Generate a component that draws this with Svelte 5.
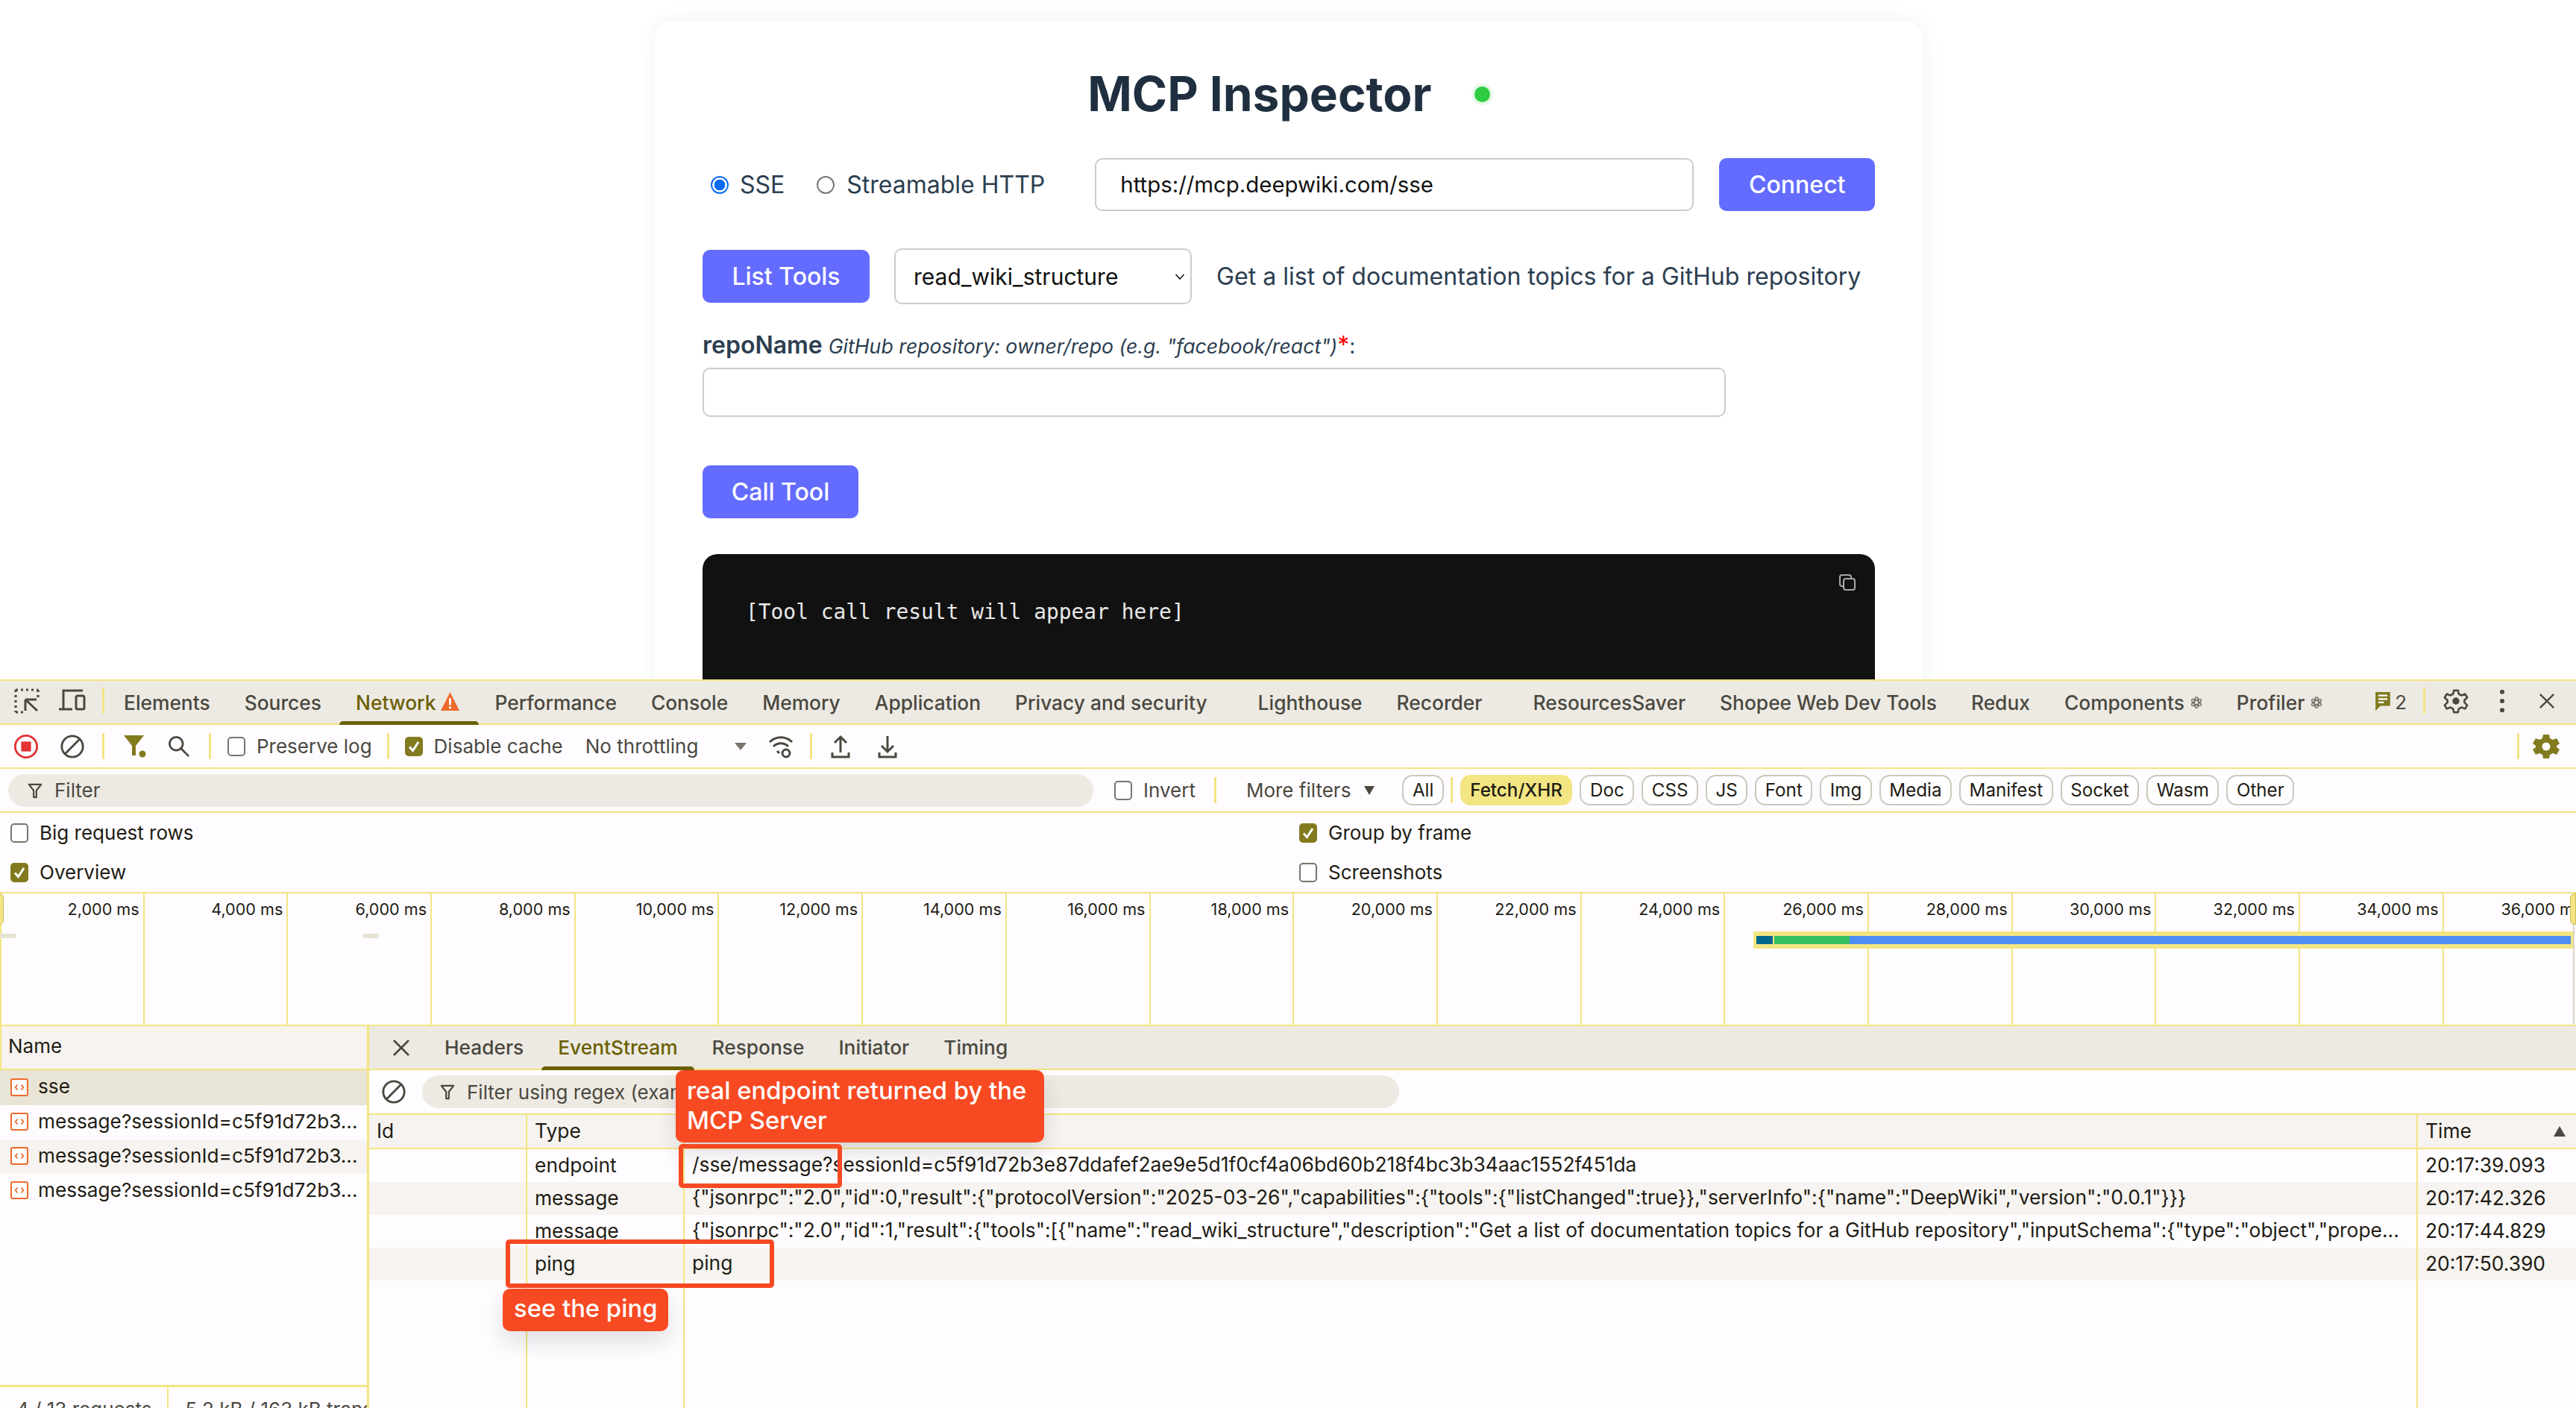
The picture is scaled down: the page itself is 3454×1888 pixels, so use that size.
<script>
  const tabs = [
    { t: 'Elements' }, { t: 'Sources' }, { t: 'Network', on: true, warn: true }, { t: 'Performance' },
    { t: 'Console' }, { t: 'Memory' }, { t: 'Application' }, { t: 'Privacy and security' },
    { t: 'Lighthouse', far: true }, { t: 'Recorder' }, { t: 'ResourcesSaver', far: true },
    { t: 'Shopee Web Dev Tools' }, { t: 'Redux' }, { t: 'Components', atom: true }, { t: 'Profiler', atom: true }
  ];
  const chips = ['Doc', 'CSS', 'JS', 'Font', 'Img', 'Media', 'Manifest', 'Socket', 'Wasm', 'Other'];
  const ticks = Array.from({ length: 18 }, (_, i) => ((i + 1) * 2000).toLocaleString('en-US') + ' ms');
  const reqs = ['sse', 'message?sessionId=c5f91d72b3...', 'message?sessionId=c5f91d72b3...', 'message?sessionId=c5f91d72b3...'];
  const events = [
    ['endpoint', '/sse/message?sessionId=c5f91d72b3e87ddafef2ae9e5d1f0cf4a06bd60b218f4bc3b34aac1552f451da', '20:17:39.093'],
    ['message', '{"jsonrpc":"2.0","id":0,"result":{"protocolVersion":"2025-03-26","capabilities":{"tools":{"listChanged":true}},"serverInfo":{"name":"DeepWiki","version":"0.0.1"}}}', '20:17:42.326'],
    ['message', '{"jsonrpc":"2.0","id":1,"result":{"tools":[{"name":"read_wiki_structure","description":"Get a list of documentation topics for a GitHub repository","inputSchema":{"type":"object","prope...', '20:17:44.829'],
    ['ping', 'ping', '20:17:50.390']
  ];
</script>

{#snippet atom()}
  <svg class="atom" viewBox="0 0 16 18"><g fill="none" stroke="#77756a" stroke-width="1.4"><ellipse cx="8" cy="9" rx="7.200" ry="2.800" transform="rotate(90 8 9)"/><ellipse cx="8" cy="9" rx="7.200" ry="2.800" transform="rotate(30 8 9)"/><ellipse cx="8" cy="9" rx="7.200" ry="2.800" transform="rotate(150 8 9)"/></g></svg>
{/snippet}

{#snippet check(on)}
  <span class="cb" class:on>
    {#if on}<svg viewBox="0 0 24 26"><path d="M6 13.5l4.5 5L18 7" fill="none" stroke="#fff" stroke-width="3"/></svg>{/if}
  </span>
{/snippet}

{#snippet funnel()}
  <svg class="fn" viewBox="0 0 22 22"><path d="M2 2h18l-7 9v10h-4V11z" fill="none" stroke="#4a483f" stroke-width="2.4" stroke-linejoin="round"/></svg>
{/snippet}

{#snippet ban()}
  <svg class="ban" viewBox="0 0 36 36"><circle cx="18" cy="18" r="15" fill="none" stroke="#4a483f" stroke-width="3"/><path d="M7 29L29 7" stroke="#4a483f" stroke-width="3"/></svg>
{/snippet}

<div class="root">
  <main class="page">
    <section class="card">
      <h1>MCP Inspector <span class="dot"></span></h1>
      <div class="conn">
        <span class="radio on"></span><span class="rl">SSE</span>
        <span class="radio second"></span><span class="rl">Streamable HTTP</span>
        <input class="url" value="https://mcp.deepwiki.com/sse" />
        <button class="btn connect">Connect</button>
      </div>
      <div class="tool">
        <button class="btn list">List Tools</button>
        <div class="select">read_wiki_structure<svg viewBox="0 0 14 10"><path d="M1.500 2l5.500 6 5.500-6" fill="none" stroke="#222" stroke-width="1.8"/></svg></div>
        <p class="desc">Get a list of documentation topics for a GitHub repository</p>
      </div>
      <div class="label"><b>repoName</b> <i>GitHub repository: owner/repo (e.g. "facebook/react")</i><span class="req">*</span>:</div>
      <input class="repo" />
      <button class="btn call">Call Tool</button>
      <div class="result">
        <code>[Tool call result will appear here]</code>
        <svg class="copy" viewBox="0 0 24 24"><g fill="none" stroke="#a8a8a8" stroke-width="2"><rect x="2" y="2" width="15" height="15" rx="3"/><rect x="7" y="7" width="15" height="15" rx="3" fill="#111"/></g></svg>
      </div>
    </section>
  </main>

  <div class="dt">
    <div class="tabbar">
      <svg class="ic36 inspect" viewBox="0 0 36 36"><path d="M3 4h30M3 4v30M33 4v12M3 34h12" fill="none" stroke="#4a483f" stroke-width="3.2" stroke-dasharray="3 4"/><path d="M16 17h15M16 17v15M16 17l16 15" fill="none" stroke="#4a483f" stroke-width="3"/></svg>
      <svg class="ic36 device" viewBox="0 0 36 30"><path d="M6 26V2h26M0 27h18" fill="none" stroke="#4a483f" stroke-width="3"/><rect x="23" y="9" width="11" height="18" rx="2" fill="none" stroke="#4a483f" stroke-width="3"/></svg>
      <span class="vd first"></span>
      {#each tabs as x}
        <div class="tab" class:on={x.on} class:far={x.far}>
          {x.t}
          {#if x.warn}<svg class="warn" viewBox="0 0 27 28"><path d="M13.500 1L27 28H0z" fill="#ee6a2c"/><path d="M12 10h3v10h-3zM12 22h3v3h-3z" fill="#fff"/></svg>{/if}
          {#if x.atom}{@render atom()}{/if}
        </div>
      {/each}
      <div class="tabright">
        <svg class="msg" viewBox="0 0 24 30"><path d="M2 1h21v20H9l-7 7z" fill="#827a1f"/><path d="M6 6h13M6 11h13M6 16h8" stroke="#fff" stroke-width="2.400"/></svg>
        <span class="count">2</span>
        <span class="vd r1"></span>
        <svg class="gear" viewBox="0 0 36 36"><path d="M15 3h6l1 5 4 2 5-2 3 5-4 4v3l4 4-3 5-5-2-4 2-1 5h-6l-1-5-4-2-5 2-3-5 4-4v-3L2 13l3-5 5 2 4-2z" fill="none" stroke="#4a483f" stroke-width="2.8" stroke-linejoin="round"/><circle cx="18" cy="18" r="5" fill="#4a483f"/></svg>
        <svg class="kebab" viewBox="0 0 8 36"><circle cx="4" cy="5" r="3.2" fill="#4a483f"/><circle cx="4" cy="18" r="3.2" fill="#4a483f"/><circle cx="4" cy="31" r="3.2" fill="#4a483f"/></svg>
        <svg class="x" viewBox="0 0 24 24"><path d="M2 2l20 20M22 2L2 22" stroke="#4a483f" stroke-width="2.6"/></svg>
      </div>
    </div>

    <div class="toolbar">
      <svg class="rec" viewBox="0 0 36 36"><circle cx="18" cy="18" r="15.5" fill="none" stroke="#e23232" stroke-width="3"/><rect x="11" y="11" width="14" height="14" fill="#e23232"/></svg>
      <span class="clear">{@render ban()}</span>
      <span class="vd t1"></span>
      <svg class="ffill" viewBox="0 0 32 32"><path d="M1 1h27L17 15v13h-5V15z" fill="#827a1f"/><circle cx="26" cy="26" r="4.500" fill="#827a1f"/></svg>
      <svg class="search" viewBox="0 0 32 32"><circle cx="12" cy="12" r="9.500" fill="none" stroke="#4a483f" stroke-width="3"/><path d="M19 19l11 11" stroke="#4a483f" stroke-width="3"/></svg>
      <span class="vd t2"></span>
      <label class="opt o1">{@render check(false)}Preserve log</label>
      <span class="vd t3"></span>
      <label class="opt o2">{@render check(true)}Disable cache</label>
      <span class="throttle">No throttling</span>
      <span class="tri"></span>
      <svg class="wifi" viewBox="0 0 34 34"><g fill="none" stroke="#4a483f" stroke-width="3"><path d="M2 11a21 21 0 0 1 30 0M7 17a14 14 0 0 1 20 0M12 23l3 3"/></g><circle cx="24" cy="26" r="5" fill="none" stroke="#4a483f" stroke-width="3"/></svg>
      <span class="vd t4"></span>
      <svg class="arrow up" viewBox="0 0 26 32"><path d="M13 24V3M5 11l8-8 8 8M2 24v6h22v-6" fill="none" stroke="#4a483f" stroke-width="3"/></svg>
      <svg class="arrow down" viewBox="0 0 26 32"><path d="M13 2v21M5 15l8 8 8-8M2 24v6h22v-6" fill="none" stroke="#4a483f" stroke-width="3"/></svg>
      <span class="tbend"><span class="vd"></span>
        <svg class="gear2" viewBox="0 0 36 36"><path d="M14 2h8l1 5 4 2 5-2 4 7-4 3v2l4 3-4 7-5-2-4 2-1 5h-8l-1-5-4-2-5 2-4-7 4-3v-2l-4-3 4-7 5 2 4-2z" fill="#827a1f"/><circle cx="18" cy="18" r="5.500" fill="#fff"/></svg>
      </span>
    </div>

    <div class="filterbar">
      <div class="pill main">{@render funnel()}<span>Filter</span></div>
      <label class="opt inv">{@render check(false)}Invert</label>
      <span class="vd f1"></span>
      <span class="more">More filters</span><span class="tri dark"></span>
      <span class="chip all">All</span>
      <span class="vd f2"></span>
      <span class="chip active">Fetch/XHR</span>
      {#each chips as c}<span class="chip">{c}</span>{/each}
    </div>

    <div class="settings">
      <label class="opt set">{@render check(false)}Big request rows</label>
      <label class="opt set">{@render check(true)}Group by frame</label>
      <label class="opt set">{@render check(true)}Overview</label>
      <label class="opt set">{@render check(false)}Screenshots</label>
    </div>

    <div class="overview">
      {#each ticks as l}<div class="tick">{l}</div>{/each}
      <span class="mark m1"></span>
      <span class="mark m2"></span>
      <div class="band"><span class="b1"></span><span class="b2"></span><span class="b3"></span></div>
      <span class="handle hl"></span>
      <span class="handle hr"></span>
    </div>

    <div class="split">
      <aside class="side">
        <div class="sidehead">Name</div>
        <div class="reqs">
          {#each reqs as r, i}
            <div class="req-row" class:sel={i === 0} class:alt={i === 2}>
              <span class="ric"><svg viewBox="0 0 16 12"><path d="M5 2L1.500 6 5 10M11 2l3.500 4L11 10" fill="none" stroke="#ee6a2c" stroke-width="2"/></svg></span><span class="rname">{r}</span>
            </div>
          {/each}
        </div>
        <div class="status"><span>4 / 13 requests</span><span class="sep">5.2 kB / 163 kB transferred</span></div>
      </aside>
      <section class="detail">
        <div class="dtabs">
          <svg class="x dx" viewBox="0 0 24 24"><path d="M2 2l20 20M22 2L2 22" stroke="#4a483f" stroke-width="2.6"/></svg>
          <span class="dtab">Headers</span>
          <span class="dtab on">EventStream</span>
          <span class="dtab">Response</span>
          <span class="dtab">Initiator</span>
          <span class="dtab">Timing</span>
        </div>
        <div class="esfilter">
          <span class="esban">{@render ban()}</span>
          <div class="pill es">{@render funnel()}<span>Filter using regex (example: (web)?socket)</span></div>
        </div>
        <div class="table">
          <div class="trow head"><div>Id</div><div>Type</div><div></div><div class="timecol">Time<span class="sort"></span></div></div>
          {#each events as e}
            <div class="trow"><div></div><div>{e[0]}</div><div class="data">{e[1]}</div><div>{e[2]}</div></div>
          {/each}
          <div class="trow fill"><div></div><div></div><div></div><div></div></div>
        </div>
      </section>
    </div>
  </div>

  <div class="note n1">real endpoint returned by the MCP Server</div>
  <div class="frame f-a"></div>
  <div class="frame f-b"></div>
  <div class="note n2">see the ping</div>
</div>

<style>
  :global(body) { margin: 0; background: #fff; }
  .root { position: relative; width: 3454px; height: 1888px; overflow: hidden; display: flex; flex-direction: column; font-family: Inter, "Liberation Sans", sans-serif; }

  /* page */
  .page { height: 911px; flex: none; overflow: hidden; background: #fff; }
  .card { width: 1700px; height: 1000px; margin: 28px 0 0 878px; box-sizing: border-box; padding: 0 64px; background: #fff; border-radius: 24px; box-shadow: 0 0 28px rgba(0,0,0,.06); }
  h1 { margin: 0; padding-top: 59px; height: 125px; box-sizing: border-box; text-align: center; font-size: 64px; line-height: 78px; font-weight: 700; color: #1f2f3f; letter-spacing: 0; }
  .dot { display: inline-block; width: 21px; height: 21px; margin-left: 42px; vertical-align: 12px; background: #2ecc40; border-radius: 50%; box-shadow: 0 0 0 4px rgba(46,204,64,.12); }
  .conn { display: flex; align-items: center; height: 71px; margin-top: 59px; font-size: 32px; color: #2c3e50; white-space: nowrap; }
  .radio { width: 24px; height: 24px; box-sizing: border-box; border: 2px solid #767676; border-radius: 50%; margin-left: 11px; flex: none; }
  .radio.on { border: 2px solid #0a6cf5; background: radial-gradient(circle, #0a6cf5 0 7px, #fff 7.6px); }
  .radio.second { margin-left: 43px; margin-right: 1px; }
  .rl { margin-left: 15px; flex: none; }
  input { font: inherit; box-sizing: border-box; background: #fff; border: 2px solid #ccc; border-radius: 10px; outline: none; }
  .url { width: 803px; flex: none; height: 71px; margin-left: 67px; padding: 0 32px; font-size: 29.4px; color: #111; }
  .btn { border: 0; border-radius: 10px; background: #646cff; color: #fff; font: 500 32px Inter, sans-serif; height: 71px; padding: 0; }
  .connect { width: 209px; flex: none; margin-left: 34px; }
  .tool { display: flex; align-items: center; height: 75px; margin-top: 50px; }
  .list { width: 224px; }
  .select { width: 399px; height: 75px; margin-left: 33px; box-sizing: border-box; border: 2px solid #ccc; border-radius: 10px; padding-left: 24px; display: flex; align-items: center; justify-content: space-between; font-size: 30px; color: #111; }
  .select svg { width: 14px; height: 10px; margin-right: 7px; }
  .desc { margin: 0 0 0 33px; font-size: 32.1px; color: #2c3e50; white-space: nowrap; }
  .label { margin-top: 32px; height: 46px; line-height: 46px; font-size: 28px; color: #2c3e50; white-space: nowrap; }
  .label b { font-size: 32px; font-weight: 600; }
  .label i { font-size: 26.7px; }
  .req { color: #f00; font-size: 32px; }
  .repo { display: block; width: 1372px; height: 66px; margin-top: 7px; }
  .call { display: block; width: 209px; margin-top: 65px; }
  .result { position: relative; margin-top: 48px; height: 300px; background: #111; border-radius: 20px; box-sizing: border-box; padding: 57px 58px; }
  code { font: 27.9px/42px "DejaVu Sans Mono", monospace; color: #e8e8e8; }
  .copy { position: absolute; top: 26px; right: 25px; width: 24px; height: 24px; }

  /* devtools */
  .dt { flex: 1; min-height: 0; display: flex; flex-direction: column; background: #fefcff; color: #1e1c14; font-size: 26px; border-top: 2px solid #f3e582; }
  .tabbar { height: 57px; flex: none; display: flex; align-items: center; background: #edeae3; border-bottom: 2px solid #f3e582; color: #4a483f; font-weight: 500; font-size: 26.35px; white-space: nowrap; }
  .ic36 { width: 36px; height: 36px; flex: none; }
  .inspect { margin-left: 18px; margin-top: -6px; }
  .device { margin-left: 25px; margin-top: -6px; height: 30px; }
  .vd { display: inline-block; width: 3px; height: 35px; background: #f3e582; flex: none; }
  .vd.first { margin: -4px 0 0 22px; }
  .tab { position: relative; height: 100%; display: flex; align-items: center; margin-left: 46px; flex: none; }
  .vd.first + .tab { margin-left: 26px; }
  .tab.far { margin-left: 68px; }
  .tab.on { color: #6b6000; }
  .tab.on::after { content: ""; position: absolute; left: -22px; right: -25px; bottom: -2px; height: 5px; background: #6b6000; border-radius: 5px 5px 0 0; }
  .warn { width: 27px; height: 26px; margin-left: 6px; margin-top: -4px; }
  .atom { width: 16px; height: 18px; margin-left: 8px; }
  .tabright { margin-left: auto; display: flex; align-items: center; flex: none; }
  .msg { width: 23px; height: 28px; margin-top: -2px; }
  .count { margin-left: 5px; font-size: 26px; font-weight: 400; }
  .vd.r1 { margin-left: 22px; margin-top: -4px; }
  .gear { width: 34px; height: 34px; margin-left: 24px; margin-top: -4px; }
  .kebab { width: 8px; height: 34px; margin-left: 41px; margin-top: -4px; }
  .x { width: 22px; height: 22px; margin-left: 45px; margin-right: 28px; margin-top: -4px; }

  .toolbar { height: 57px; flex: none; display: flex; align-items: center; border-bottom: 2px solid #f3e582; color: #4a483f; white-space: nowrap; }
  .rec { width: 34px; height: 34px; margin-left: 18px; }
  .clear { display: flex; margin-left: 28px; }
  .ban { width: 34px; height: 34px; display: block; }
  .vd.t1 { margin-left: 23px; }
  .ffill { width: 32px; height: 32px; margin-left: 25px; }
  .search { width: 30px; height: 30px; margin-left: 28px; }
  .vd.t2 { margin-left: 25px; }
  .opt { display: inline-flex; align-items: center; color: inherit; white-space: nowrap; }
  .cb { width: 24px; height: 26px; box-sizing: border-box; border: 2px solid #77756d; border-radius: 5px; margin-right: 15px; flex: none; display: block; background: #fff; }
  .cb.on { background: #827a1f; border-color: #827a1f; }
  .cb svg { display: block; width: 24px; height: 26px; margin: -2px; }
  .o1 { margin-left: 22px; }
  .vd.t3 { margin-left: 20px; }
  .o2 { margin-left: 21px; }
  .throttle { margin-left: 30px; }
  .tri { width: 0; height: 0; border-left: 8px solid transparent; border-right: 8px solid transparent; border-top: 10px solid #77756d; margin-left: 49px; }
  .wifi { width: 34px; height: 34px; margin-left: 29px; }
  .vd.t4 { margin-left: 22px; }
  .arrow { width: 26px; height: 32px; }
  .up { margin-left: 25px; }
  .down { margin-left: 37px; }
  .tbend { margin-left: auto; display: flex; align-items: center; margin-right: 22px; }
  .gear2 { width: 36px; height: 36px; margin-left: 18px; }

  .filterbar { height: 57px; flex: none; display: flex; align-items: center; border-bottom: 2px solid #f3e582; white-space: nowrap; color: #4a483f; }
  .pill { display: flex; align-items: center; height: 44px; background: #edeae3; border-radius: 22px; color: #4a483f; overflow: hidden; white-space: nowrap; }
  .fn { width: 20px; height: 22px; flex: none; }
  .main { width: 1455px; margin-left: 11px; padding-left: 26px; box-sizing: border-box; }
  .pill span { margin-left: 16px; }
  .inv { margin-left: 28px; }
  .vd.f1 { margin-left: 25px; }
  .more { margin-left: 40px; }
  .tri.dark { border-top-color: #4a483f; border-left-width: 7px; border-right-width: 7px; margin-left: 18px; border-top-width: 12px; }
  .chip { height: 41px; box-sizing: border-box; padding: 0 11.5px; margin-left: 10px; border: 2px solid #ccc8bc; border-radius: 14px; display: flex; align-items: center; color: #1e1c14; background: #fff; font-size: 24.2px; }
  .chip.all { margin-left: 37px; }
  .vd.f2 { margin-left: 9px; }
  .chip.active { background: #f3e582; border-color: #f3e582; font-weight: 500; }

  .settings { height: 108px; flex: none; box-sizing: border-box; display: grid; grid-template-columns: 1728px 1fr; grid-auto-rows: 53px; padding: 0 0 0 14px; align-items: center; border-bottom: 2px solid #f3e582; color: #1e1c14; }

  .overview { position: relative; height: 176px; flex: none; display: grid; grid-template-columns: repeat(18, 192.7px); padding-left: 1px; border-bottom: 2px solid #f3e582; overflow: hidden; }
  .overview::before { content: ""; position: absolute; left: 0; top: 0; bottom: 0; width: 2px; background: #f3e582; }
  .overview::after { content: ""; position: absolute; right: 2px; top: 42px; bottom: 0; width: 2px; background: #d8d4c4; }
  .tick { border-right: 2px solid #f3e582; box-sizing: border-box; text-align: right; padding: 8px 5px 0 0; font-size: 21.6px; color: #1e1c14; white-space: nowrap; }
  .mark { position: absolute; top: 54px; height: 6px; width: 21px; background: #e6e3d3; }
  .m1 { left: 0; }
  .m2 { left: 487px; }
  .band { position: absolute; left: 2351px; right: 3px; top: 51px; height: 23px; background: #f3e582; display: flex; align-items: center; padding: 0 4px; }
  .band span { height: 11px; display: block; }
  .b1 { width: 22px; background: #00688b; margin-right: 2px; }
  .b2 { width: 101px; background: #34c05f; }
  .b3 { flex: 1; background: #4d8df4; }
  .handle { position: absolute; top: 0; width: 8px; height: 42px; background: #f3e582; border: 1px solid #c9bd5f; box-sizing: border-box; }
  .hl { left: -3px; border-radius: 0 6px 6px 0; }
  .hr { right: 0; border-radius: 6px 0 0 6px; }

  .split { flex: 1; min-height: 0; display: flex; }
  .side { width: 495px; flex: none; box-sizing: border-box; border-right: 3px solid #f3e582; display: flex; flex-direction: column; }
  .sidehead { height: 57px; flex: none; line-height: 54px; padding-left: 9px; background: #f6f3f0; border-bottom: 2px solid #f3e582; border-left: 2px solid #f3e582; }
  .reqs { flex: 1; }
  .req-row { height: 46px; display: flex; align-items: center; padding-left: 14px; white-space: nowrap; overflow: hidden; font-size: 26.2px; }
  .req-row.sel { background: #e9e5d6; height: 47px; }
  .req-row.alt { background: #f6f3f0; }
  .rname { margin-top: -4px; }
  .ric { width: 24px; height: 24px; box-sizing: border-box; border: 2px solid #ee6a2c; border-radius: 3px; margin: -2px 13px 0 0; display: flex; align-items: center; justify-content: center; background: #fff; flex: none; }
  .ric svg { width: 14px; height: 10px; }
  .status { height: 28px; flex: none; border-top: 3px solid #f3e582; display: flex; color: #4a483f; padding-left: 22px; white-space: nowrap; overflow: hidden; line-height: 60px; font-size: 26px; }
  .sep { margin-left: 21px; padding-left: 22px; border-left: 2px solid #f3e582; }

  .detail { flex: 1; min-width: 0; display: flex; flex-direction: column; }
  .dtabs { height: 57px; flex: none; display: flex; align-items: center; background: #edeae3; border-bottom: 2px solid #f3e582; color: #4a483f; font-weight: 500; font-size: 26.3px; gap: 46px; }
  .dx { margin: 0 0 0 31px; width: 24px; height: 24px; }
  .dtab { position: relative; height: 100%; display: flex; align-items: center; }
  .dtab.on { color: #6b6000; }
  .dtab.on::after { content: ""; position: absolute; left: -22px; right: -22px; bottom: -2px; height: 5px; background: #6b6000; border-radius: 5px 5px 0 0; }
  .esfilter { height: 58px; flex: none; display: flex; align-items: center; border-bottom: 2px solid #f3e582; }
  .esban { margin-left: 16px; display: flex; }
  .es { width: 1310px; margin-left: 21px; padding-left: 24px; box-sizing: border-box; }
  .table { flex: 1; min-height: 0; display: flex; flex-direction: column; }
  .trow { display: grid; grid-template-columns: 212px 211px 2324px 212px; height: 44px; flex: none; padding-left: 0; }
  .trow > div { display: flex; align-items: center; padding: 0 0 3px 10px; box-sizing: border-box; border-right: 2px solid #f3e582; white-space: nowrap; overflow: hidden; min-width: 0; font-size: 26.4px; }
  .trow > div:last-child { border-right: 0; }
  .trow:nth-child(odd):not(.head) { background: #f6f3f0; }
  .head { background: #f6f3f0; height: 44px; border-bottom: 2px solid #f3e582; }
  .data { display: block !important; line-height: 41px; }
  .timecol { position: relative; }
  .sort { position: absolute; right: 14px; top: 15px; width: 0; height: 0; border-left: 8px solid transparent; border-right: 8px solid transparent; border-bottom: 14px solid #4a483f; }
  .trow.fill { flex: 1; background: none !important; }

  .note { position: absolute; background: #f74a23; color: #fff; font-weight: 500; font-size: 32.8px; line-height: 40px; border-radius: 10px; box-sizing: border-box; box-shadow: 0 14px 30px rgba(0,0,0,.12); }
  .n1 { left: 906px; top: 1435px; width: 494px; height: 97px; padding: 7px 15px; }
  .n2 { left: 674px; top: 1728px; width: 222px; height: 57px; padding: 6px 15px; white-space: nowrap; }
  .frame { position: absolute; border: 6px solid #f74a23; border-radius: 5px; box-sizing: border-box; }
  .f-a { left: 910px; top: 1534px; width: 219px; height: 59px; }
  .f-b { left: 678px; top: 1662px; width: 360px; height: 65px; }
</style>
